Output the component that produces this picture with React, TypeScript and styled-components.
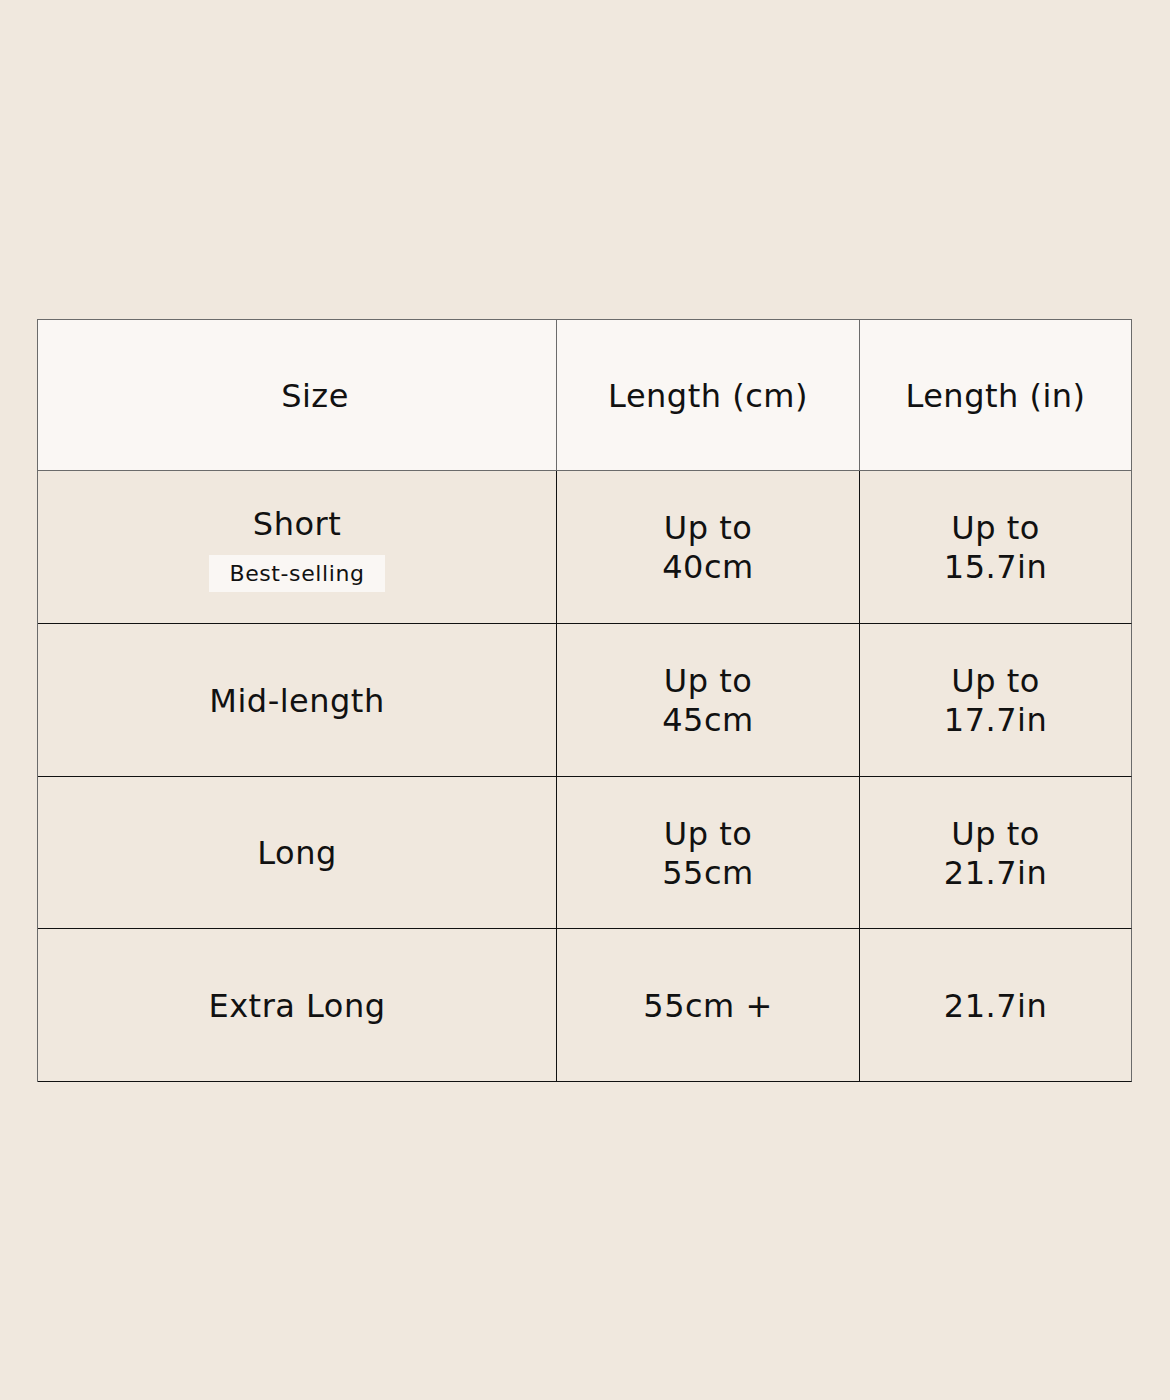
import React from "react";
import styled, { createGlobalStyle } from "styled-components";

const Global = createGlobalStyle`
  html, body { margin: 0; padding: 0; background: #f0e8de; }
  body { font-family: "DejaVu Sans", "Liberation Sans", sans-serif; color: #111; }
`;

const Page = styled.div`
  width: 1170px;
  height: 1400px;
  box-sizing: border-box;
  padding: 319px 0 0 37px;
  background: #f0e8de;
`;

const Grid = styled.div`
  display: grid;
  width: 1095px;
  grid-template-columns: 519px 303px 272px;
  grid-template-rows: 151px 153px 153px 152px 153px;
  border-left: 1px solid #6b6b6b;
  border-top: 1px solid #6b6b6b;
  box-sizing: border-box;
`;

const Cell = styled.div<{ $head?: boolean; $last?: boolean; $shift?: number }>`
  box-sizing: border-box;
  display: flex;
  flex-direction: column;
  align-items: center;
  justify-content: center;
  text-align: center;
  background: ${(p) => (p.$head ? "#faf7f4" : "#f0e8de")};
  border-right: 1px solid ${(p) => (p.$head || p.$last ? "#6b6b6b" : "#111")};
  border-bottom: 1px solid ${(p) => (p.$head ? "#6b6b6b" : "#111")};
  padding-left: ${(p) => (p.$shift ? p.$shift * 2 : 0)}px;
  padding-top: ${(p) => (p.$head ? 3 : 2)}px;
  font-size: 32px;
  line-height: 39px;
  letter-spacing: 0.5px;
  color: #111;
`;

const Name = styled.span`
  display: block;
`;

const Badge = styled.span`
  display: inline-block;
  margin-top: 11px;
  padding: 0 20px;
  height: 37px;
  line-height: 37px;
  font-size: 22px;
  letter-spacing: 0.6px;
  background: #faf7f4;
`;

type Row = { name: string; badge?: string; cm: string[]; inch: string[] };

const rows: Row[] = [
  { name: "Short", badge: "Best-selling", cm: ["Up to", "40cm"], inch: ["Up to", "15.7in"] },
  { name: "Mid-length", cm: ["Up to", "45cm"], inch: ["Up to", "17.7in"] },
  { name: "Long", cm: ["Up to", "55cm"], inch: ["Up to", "21.7in"] },
  { name: "Extra Long", cm: ["55cm +"], inch: ["21.7in"] },
];

const Lines = ({ items }: { items: string[] }) => (
  <>
    {items.map((t) => (
      <Name key={t}>{t}</Name>
    ))}
  </>
);

export default function App() {
  return (
    <Page>
      <Global />
      <Grid>
        <Cell $head $shift={18}>Size</Cell>
        <Cell $head>Length (cm)</Cell>
        <Cell $head $last>Length (in)</Cell>
        {rows.map((r) => (
          <React.Fragment key={r.name}>
            <Cell>
              <Name>{r.name}</Name>
              {r.badge && <Badge>{r.badge}</Badge>}
            </Cell>
            <Cell>
              <Lines items={r.cm} />
            </Cell>
            <Cell $last>
              <Lines items={r.inch} />
            </Cell>
          </React.Fragment>
        ))}
      </Grid>
    </Page>
  );
}
